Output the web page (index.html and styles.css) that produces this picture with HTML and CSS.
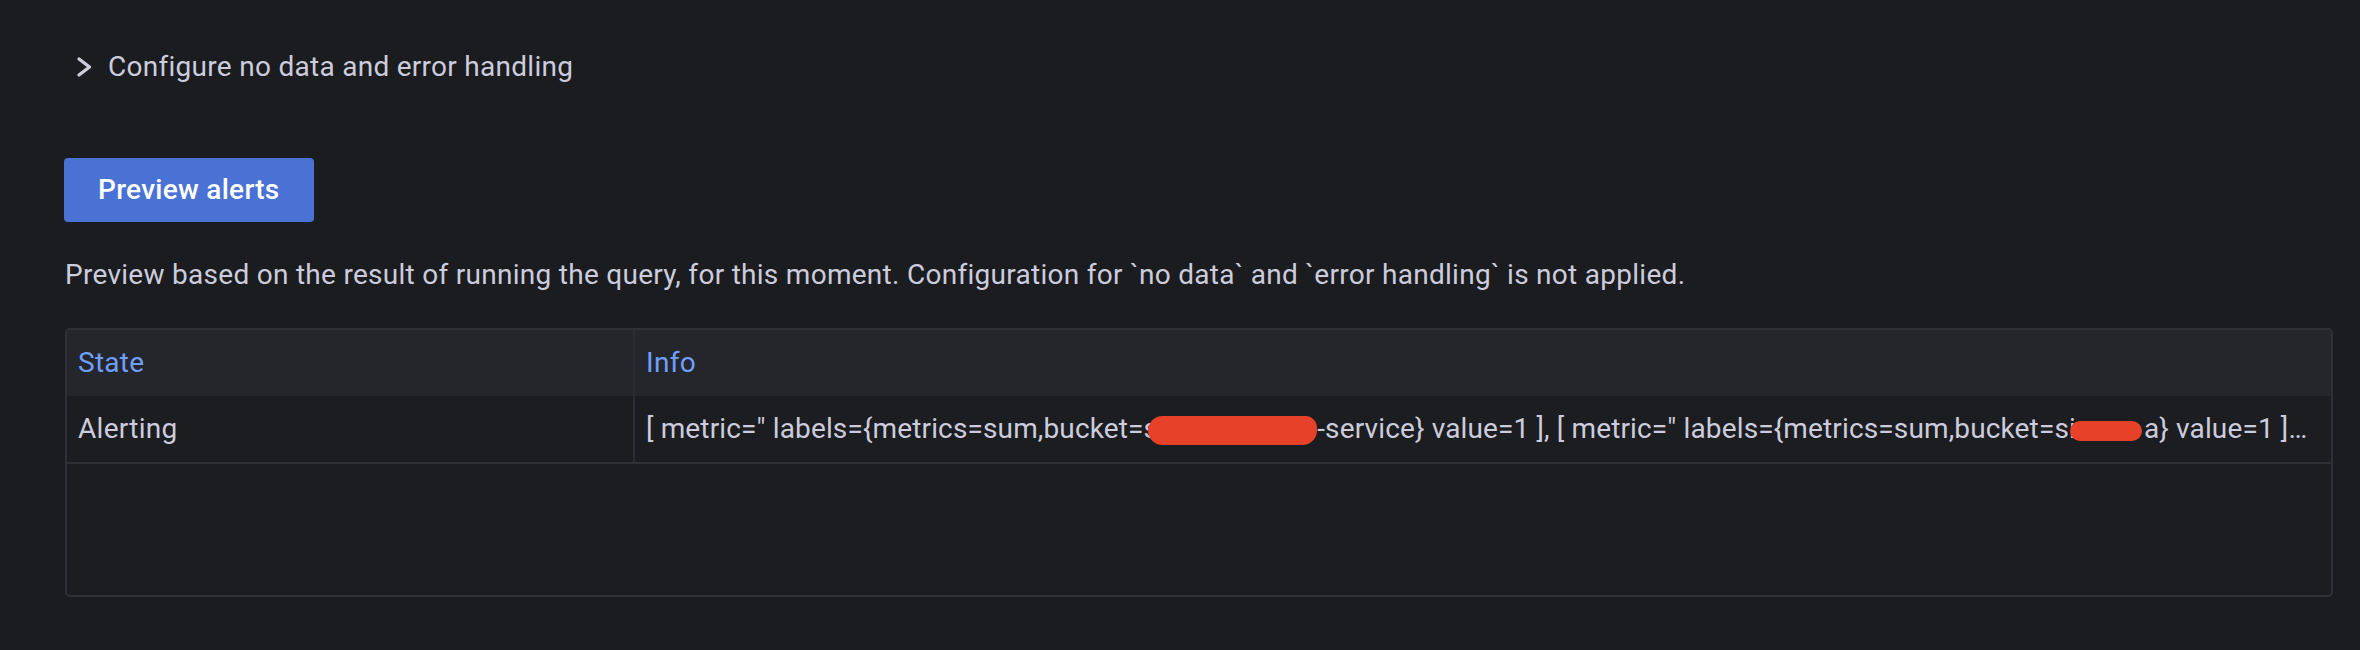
FILE: index.html
```html
<!DOCTYPE html>
<html>
<head>
<meta charset="utf-8">
<link rel="stylesheet" href="styles.css">
</head>
<body>
<div class="page">
  <div class="collapse">
    <svg class="chev" width="32" height="32" viewBox="0 0 32 32"><path d="M11 8 L21.5 16 L11 24" fill="none" stroke="#ccccdc" stroke-width="3.4" stroke-linecap="round" stroke-linejoin="round"/></svg>
    <span>Configure no data and error handling</span>
  </div>
  <button class="btn">Preview alerts</button>
  <p class="desc">Preview based on the result of running the query, for this moment. Configuration for `no data` and `error handling` is not applied.</p>
  <div class="table">
    <div class="row head">
      <div class="cell">State</div>
      <div class="cell divided">Info</div>
    </div>
    <div class="row body">
      <div class="cell">Alerting</div>
      <div class="cell divided info">[ metric=" labels={metrics=sum,bucket=s<span class="redact r1"></span>-service} value=1 ], [ metric=" labels={metrics=sum,bucket=si<span class="redact r2"></span>a} value=1 ]…</div>
    </div>
    <div class="empty"></div>
  </div>
</div>
</body>
</html>
```

FILE: styles.css
```css
* { box-sizing: border-box; }
html, body {
  margin: 0;
  background: #1b1c20;
}
body {
  font-family: Roboto, "Liberation Sans", sans-serif;
  color: #ccccdc;
  font-size: 28px;
  line-height: 40px;
  letter-spacing: 0.28px;
}
.page {
  padding: 47px 27px 0 64px;
}
.collapse {
  display: flex;
  align-items: center;
  gap: 8px;
  margin-left: 4px;
  height: 40px;
}
.chev { display: block; flex: none; }
.btn {
  display: block;
  margin-top: 71px;
  height: 64px;
  padding: 0 34px;
  border: none;
  border-radius: 4px;
  background: #4a72d4;
  color: #ffffff;
  font-family: Roboto, "Liberation Sans", sans-serif;
  font-weight: 500;
  font-size: 28px;
  letter-spacing: 0.28px;
  line-height: 64px;
}
.desc {
  margin: 33px 0 0 1px;
  line-height: 40px;
}
.table {
  margin-top: 33px;
  margin-left: 1px;
  border: 2px solid #2f3035;
  border-radius: 5px;
  overflow: hidden;
  background: #1c1d21;
}
.row {
  display: grid;
  grid-template-columns: 566px 1fr;
}
.head {
  background: #25262b;
  height: 66px;
  color: #6e9fff;
}
.body {
  height: 68px;
  border-bottom: 2px solid #2f3035;
}
.cell {
  display: flex;
  align-items: center;
  padding: 0 11px;
  white-space: nowrap;
  overflow: hidden;
}
.divided { border-left: 2px solid #2c2d32; }
.info {
  display: block;
  line-height: 66px;
  letter-spacing: 0.14px;
}
.redact {
  display: inline-block;
  background: #e8412a;
  vertical-align: middle;
}
.r1 {
  width: 169px;
  height: 29px;
  border-radius: 15px 12px 15px 15px;
  margin: 0 0 0 -10px;
}
.r2 {
  width: 72px;
  height: 20px;
  border-radius: 10px;
  margin: 0 2px 0 -6px;
}
.empty { height: 131px; }
```
